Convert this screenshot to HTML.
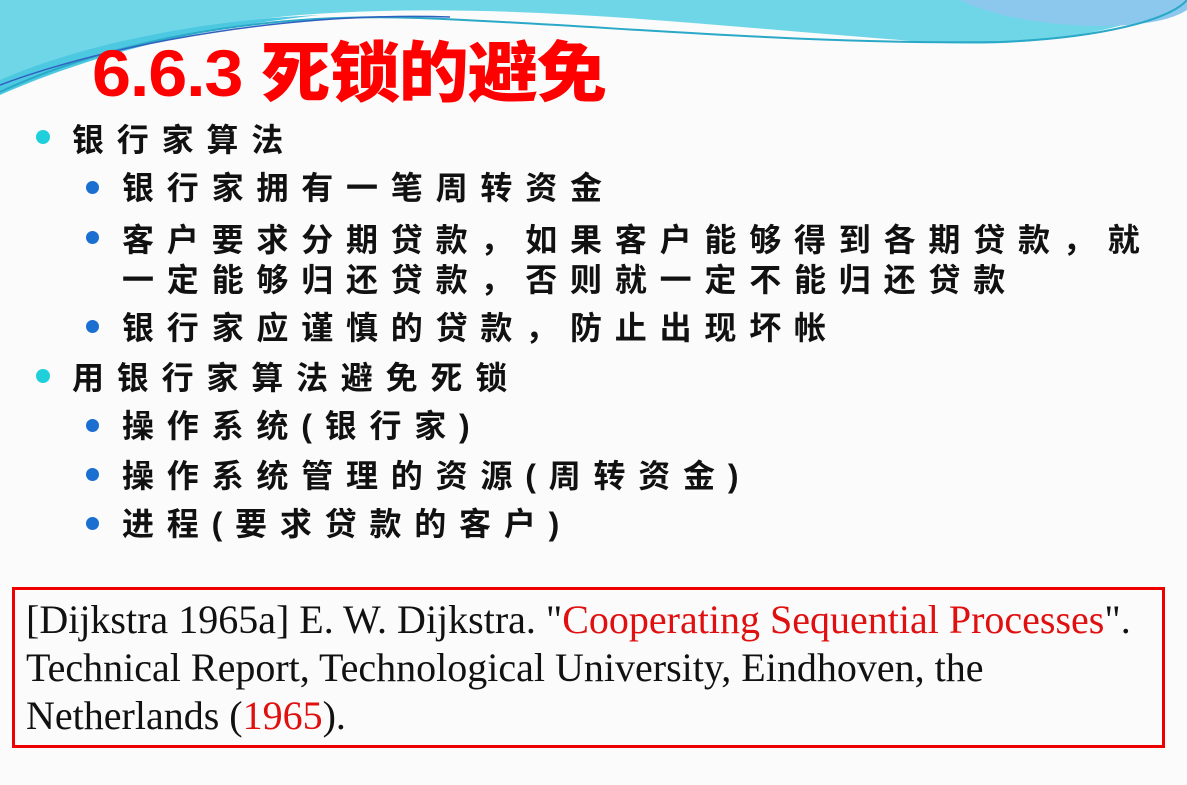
<!DOCTYPE html>
<html><head><meta charset="utf-8"><style>
body{margin:0;width:1187px;height:785px;background:#fbfbfb;position:relative;overflow:hidden;font-family:"Liberation Sans","Noto Sans CJK SC",sans-serif}
.t{position:absolute;left:92px;top:30px;font-size:60px;font-weight:900;color:#f00;line-height:80px;letter-spacing:-1px;font-family:"Liberation Sans","Noto Sans CJK SC",sans-serif;transform:scale(1.17,1.1);transform-origin:0 0}
.l{position:absolute;font-size:32px;letter-spacing:12.8px;color:#111;white-space:nowrap;line-height:40px;font-weight:bold;font-family:"Liberation Sans","Noto Sans CJK SC",sans-serif}
.d1,.d2{position:absolute;border-radius:50%}
.d1{width:14px;height:14px;background:#1fcfdc}
.d2{width:13px;height:13px;background:#1a6fd0}
.box{position:absolute;left:12px;top:587px;width:1153px;height:161px;border:3px solid #e00;font-family:"Liberation Serif",serif;font-size:40px;line-height:48px;color:#111;padding:6px 0 0 11px;box-sizing:border-box;white-space:nowrap}
.r{color:#e01010}
</style></head><body>
<svg style="position:absolute;left:0;top:0" width="1187" height="130">
<path d="M0 0H1187V0L1180 5C1100 40 1000 50 900 40C700 25 500 0 300 15C180 25 80 60 0 90Z" fill="#6fd6e8"/>
<path d="M0 80C80 45 200 20 320 15C180 30 80 60 0 95Z" fill="#4cc8e0"/>
<path d="M960 0C1020 30 1150 35 1187 10V0Z" fill="#8cc8ee"/>
<path d="M0 92C100 45 250 12 420 18C600 25 800 45 1000 42C1100 38 1170 20 1187 0" stroke="#2aa8c8" stroke-width="2" fill="none"/>
<path d="M0 85C120 40 300 12 450 17" stroke="#3060c0" stroke-width="1.5" fill="none"/>
</svg>
<div class="t">6.6.3 死锁的避免</div>
<div class="d1" style="left:36px;top:130px"></div><div class="l" style="left:72px;top:120px">银行家算法</div>
<div class="d2" style="left:86px;top:181px"></div><div class="l" style="left:122px;top:168px">银行家拥有一笔周转资金</div>
<div class="d2" style="left:86px;top:231px"></div><div class="l" style="left:122px;top:220px">客户要求分期贷款，如果客户能够得到各期贷款，就</div>
<div class="l" style="left:122px;top:260px">一定能够归还贷款，否则就一定不能归还贷款</div>
<div class="d2" style="left:86px;top:320px"></div><div class="l" style="left:122px;top:308px">银行家应谨慎的贷款，防止出现坏帐</div>
<div class="d1" style="left:36px;top:369px"></div><div class="l" style="left:72px;top:358px">用银行家算法避免死锁</div>
<div class="d2" style="left:86px;top:419px"></div><div class="l" style="left:122px;top:406px">操作系统(银行家)</div>
<div class="d2" style="left:86px;top:468px"></div><div class="l" style="left:122px;top:456px">操作系统管理的资源(周转资金)</div>
<div class="d2" style="left:86px;top:517px"></div><div class="l" style="left:122px;top:504px">进程(要求贷款的客户)</div>
<div class="box">[Dijkstra 1965a] E. W. Dijkstra. "<span class="r">Cooperating Sequential Processes</span>".<br>Technical Report, Technological University, Eindhoven, the<br>Netherlands (<span class="r">1965</span>).</div>
</body></html>
